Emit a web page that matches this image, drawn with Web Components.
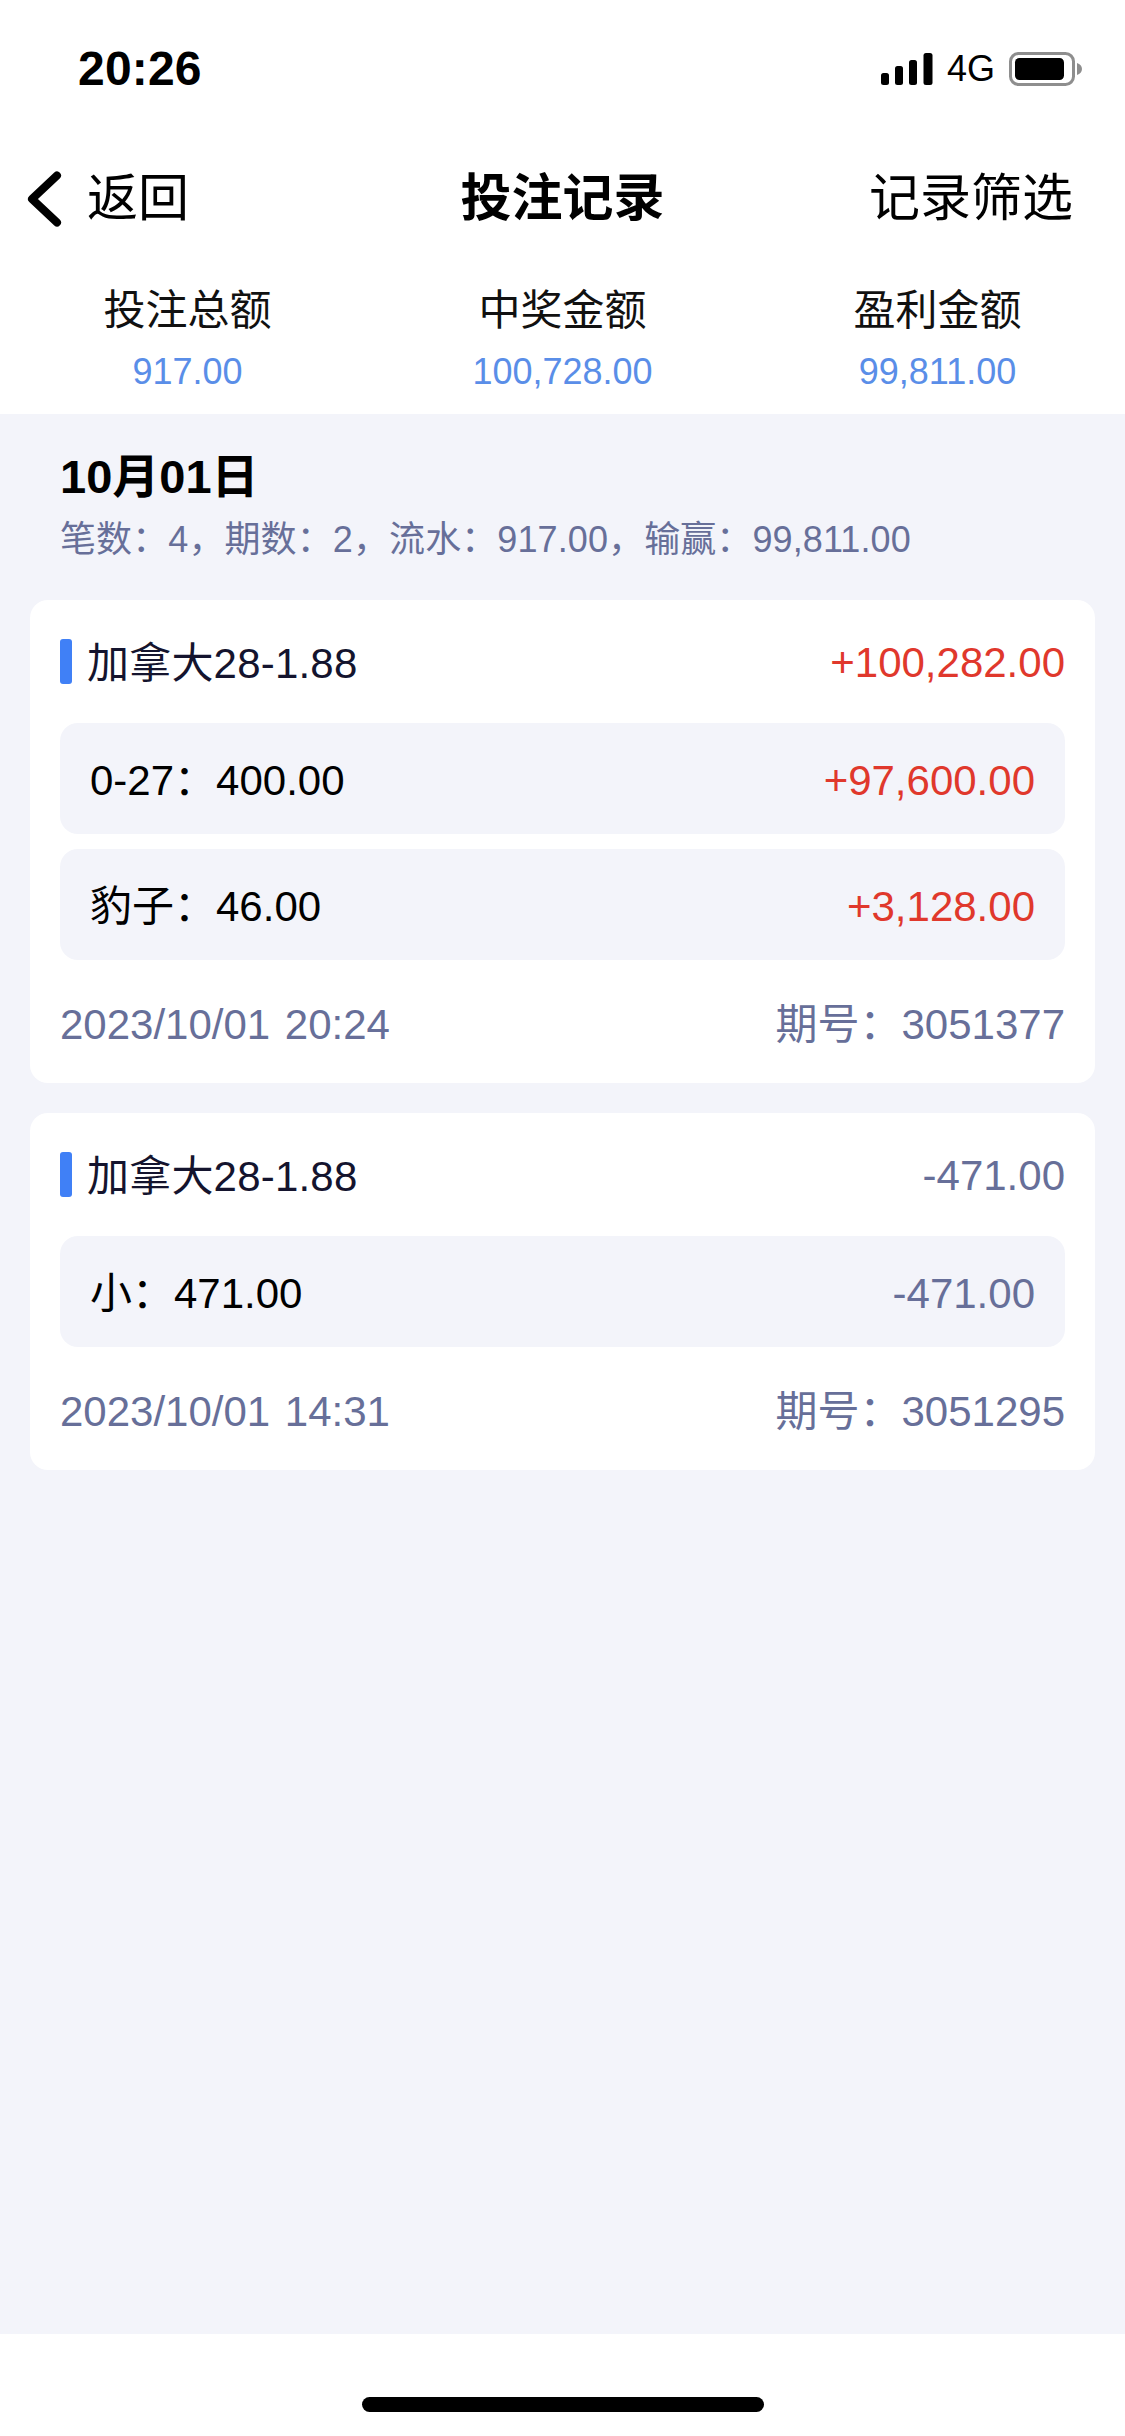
<!DOCTYPE html>
<html lang="zh-CN"><head><meta charset="utf-8"><title>投注记录</title>
<style>
html,body{margin:0;padding:0;background:#fff}
body{width:1125px;height:2436px;display:flex;flex-direction:column;font-family:"Liberation Sans","Noto Sans CJK SC",sans-serif;overflow:hidden}
main-area{flex:1}
</style></head><body>
<status-bar></status-bar>
<nav-bar title="投注记录" back="返回" action="记录筛选"></nav-bar>
<stat-strip>
  <stat-item label="投注总额" value="917.00"></stat-item>
  <stat-item label="中奖金额" value="100,728.00"></stat-item>
  <stat-item label="盈利金额" value="99,811.00"></stat-item>
</stat-strip>
<main-area>
  <day-head date="10月01日" summary="笔数：4，期数：2，流水：917.00，输赢：99,811.00"></day-head>
  <bet-card name="加拿大28-1.88" total="+100,282.00" tone="win" time="2023/10/01 20:24" issue="期号：3051377">
    <bet-row pick="0-27：400.00" amount="+97,600.00" tone="win"></bet-row>
    <bet-row pick="豹子：46.00" amount="+3,128.00" tone="win"></bet-row>
  </bet-card>
  <bet-card name="加拿大28-1.88" total="-471.00" tone="loss" time="2023/10/01 14:31" issue="期号：3051295">
    <bet-row pick="小：471.00" amount="-471.00" tone="loss"></bet-row>
  </bet-card>
</main-area>
<home-bar></home-bar>
<script>
const FONT='"Liberation Sans","Noto Sans CJK SC",sans-serif';
function def(name,render){
  customElements.define(name,class extends HTMLElement{
    connectedCallback(){
      if(this.shadowRoot)return;
      const a=n=>this.getAttribute(n)||'';
      this.attachShadow({mode:'open'}).innerHTML=render(a);
    }
  });
}
def('status-bar',()=>`<style>
:host{display:flex;height:138px;align-items:center;padding:0 43px 0 78px;background:#fff;color:#000;font-family:${FONT}}
.t{font-size:48px;font-weight:700;line-height:50px;flex:1;letter-spacing:.2px}
.r{display:flex;align-items:center}
.g{font-size:36px;line-height:40px;margin:0 14px 0 14px}
svg{display:block}
</style><span class="t">20:26</span><div class="r">
<svg width="53" height="34" viewBox="0 0 53 34"><rect x="1" y="21" width="8" height="12" rx="2.500"/><rect x="15" y="14" width="8" height="19" rx="2.500"/><rect x="29" y="8" width="8" height="25" rx="2.500"/><rect x="43.500" y="1" width="9" height="32" rx="2.500"/></svg>
<span class="g">4G</span>
<svg width="73" height="34" viewBox="0 0 73 34"><rect x="1.500" y="1.500" width="63" height="31" rx="8" fill="#fff" stroke="#8e8e8e" stroke-width="3"/><rect x="6" y="6" width="49" height="22" rx="4.500"/><path d="M68 11c3 1 5 3.200 5 6s-2 5-5 6z" fill="#8e8e8e"/></svg>
</div>`);
def('nav-bar',a=>`<style>
:host{display:grid;grid-template-columns:1fr auto 1fr;align-items:center;height:118px;box-sizing:border-box;padding:4px 52px 0 0;background:#fff;color:#000;font-family:${FONT};font-size:51px;line-height:60px}
.b{display:flex;align-items:center;padding-left:27px}
svg{display:block;margin-right:24px}
h1{margin:0 0 0 52px;font:inherit;font-weight:700;color:#000}
.a{justify-self:end}
</style><div class="b"><svg width="36" height="60" viewBox="0 0 36 60"><path d="M30 6.500 5 30 30 53.500" fill="none" stroke="#000" stroke-width="8" stroke-linecap="round" stroke-linejoin="round"/></svg><span>${a('back')}</span></div><h1>${a('title')}</h1><span class="a">${a('action')}</span>`);
def('stat-strip',()=>`<style>:host{display:grid;grid-template-columns:repeat(3,1fr);height:158px;padding-top:25px;box-sizing:border-box;background:#fff}</style><slot></slot>`);
def('stat-item',a=>`<style>
:host{display:flex;flex-direction:column;align-items:center;font-family:${FONT}}
.l{font-size:42px;line-height:60px;color:#111}
.v{font-size:36px;line-height:50px;margin-top:6px;color:#5a8ee8}
</style><span class="l">${a('label')}</span><span class="v">${a('value')}</span>`);
customElements.define('main-area',class extends HTMLElement{
  connectedCallback(){
    if(this.shadowRoot)return;
    this.attachShadow({mode:'open'}).innerHTML=`<style>:host{display:flex;flex-direction:column;flex:1;gap:30px;background:#f3f4fa;padding:0 30px;font-family:${FONT}}</style><slot></slot>`;
  }
});
def('day-head',a=>`<style>
:host{display:block;padding:33px 30px 5px}
.d{font-size:47px;line-height:60px;font-weight:700;color:#000}
.s{font-size:36px;line-height:50px;margin-top:8px;color:#676f99;letter-spacing:.1px}
</style><div class="d">${a('date')}</div><div class="s">${a('summary')}</div>`);
def('bet-card',a=>`<style>
:host{display:block;background:#fff;border-radius:18px;padding:0 30px}
.h,.f{display:flex;align-items:center;justify-content:space-between;font-size:42px;line-height:50px}
.h{height:123px}
.h span{padding-top:3px}
.n{display:flex;align-items:center;color:#14142e}
.n i{display:block;width:12px;height:45px;border-radius:3px;background:#4080f6;margin:-3px 15px 0 0}
.n b{font-weight:400;padding-top:1px;letter-spacing:.2px}
.win{color:#e0382c}.loss{color:#676f99}
.list{display:flex;flex-direction:column;gap:15px}
.f{color:#676f99;height:123px;box-sizing:border-box;padding-top:6px}
.f .w{word-spacing:3px}
</style><div class="h"><span class="n"><i></i><b>${a('name')}</b></span><span class="${a('tone')}">${a('total')}</span></div><div class="list"><slot></slot></div><div class="f"><span class="w">${a('time')}</span><span>${a('issue')}</span></div>`);
def('bet-row',a=>`<style>
:host{display:flex;align-items:center;justify-content:space-between;height:111px;box-sizing:border-box;padding:4px 30px 0;background:#f3f4fa;border-radius:18px;font-size:42px;line-height:50px;color:#000}
.win{color:#e0382c}.loss{color:#676f99}
</style><span>${a('pick')}</span><span class="${a('tone')}">${a('amount')}</span>`);
def('home-bar',()=>`<style>
:host{display:flex;justify-content:center;height:102px;padding-top:63px;box-sizing:border-box;background:#fff}
i{display:block;width:402px;height:15px;border-radius:8px;background:#000}
</style><i></i>`);
</script>
</body></html>
